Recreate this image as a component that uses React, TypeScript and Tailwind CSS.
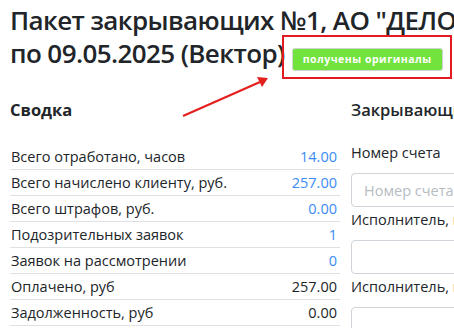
import React from 'react'

const rows = [
  { label: 'Всего отработано, часов', value: '14.00', link: true },
  { label: 'Всего начислено клиенту, руб.', value: '257.00', link: true },
  { label: 'Всего штрафов, руб.', value: '0.00', link: true },
  { label: 'Подозрительных заявок', value: '1', link: true },
  { label: 'Заявок на рассмотрении', value: '0', link: true },
  { label: 'Оплачено, руб', value: '257.00', link: false },
  { label: 'Задолженность, руб', value: '0.00', link: false },
]

function SummaryTable() {
  return (
    <div className="mt-[22px]">
      {rows.map((r) => (
        <div
          key={r.label}
          className="flex h-[26px] items-center justify-between border-b border-[#dee2e6] pl-[1px] pr-[3px]"
        >
          <span>{r.label}</span>
          <span className={r.link ? 'text-[#3a8cf4]' : 'text-[#212529]'}>{r.value}</span>
        </div>
      ))}
    </div>
  )
}

function Field({ label, placeholder }: { label: string; placeholder?: string }) {
  return (
    <div>
      <div className="mb-[7px] h-[26px] leading-[26px] whitespace-nowrap">{label}</div>
      <input
        className="h-[34px] w-full rounded-[4px] border border-[#ced4da] px-3 text-[14.5px] placeholder:text-[#b6bcc2] outline-none"
        placeholder={placeholder}
      />
    </div>
  )
}

export default function App() {
  return (
    <div
      className="relative h-[328px] w-[454px] overflow-hidden bg-white text-[#212529]"
      style={{ fontFamily: '"Open Sans", "Noto Sans", sans-serif' }}
    >
      <div className="w-[800px] px-[10px]">
        <h1 className="pt-[4px] text-[26px] font-semibold leading-[33px] tracking-[-0.6px] text-[#212529]">
          <span className="whitespace-nowrap">Пакет закрывающих №1, АО "ДЕЛОВЫЕ ЛИНИИ" с 01.05.2025</span>
          <br />
          <span className="whitespace-nowrap">по 09.05.2025 (Вектор)</span>
          <span className="relative top-[3px] ml-[7px] inline-block h-[23px] rounded-[3px] border border-[#cfd4cc] bg-[#72e23c] px-[10px] align-middle text-[10.5px] font-bold leading-[21px] tracking-[0.5px] text-white">
            получены оригиналы
          </span>
        </h1>

        <div className="mt-[28px] grid grid-cols-[330px_330px] gap-x-[11px] text-[14.5px]">
          <section>
            <h2 className="h-[24px] text-[16.5px] font-bold leading-[24px]">Сводка</h2>
            <SummaryTable />
          </section>
          <section>
            <h2 className="h-[24px] whitespace-nowrap text-[16.5px] font-semibold leading-[24px]">
              Закрывающие документы
            </h2>
            <div className="mt-[18px]">
              <Field label="Номер счета" placeholder="Номер счета" />
              <Field label="Исполнитель, подписант" />
              <Field label="Исполнитель, печать" />
            </div>
          </section>
        </div>
      </div>

      {/* annotation overlay */}
      <div className="pointer-events-none absolute left-[282px] top-[35px] h-[44px] w-[170px] border-2 border-[#e11b1f]" />
      <svg
        className="pointer-events-none absolute left-0 top-0"
        width="454"
        height="328"
        viewBox="0 0 454 328"
      >
        <line x1="183" y1="116" x2="260" y2="82" stroke="#e4201f" strokeWidth="2.2" />
        <polygon points="268,78 257,77 262,87" fill="#e4201f" />
      </svg>
    </div>
  )
}
